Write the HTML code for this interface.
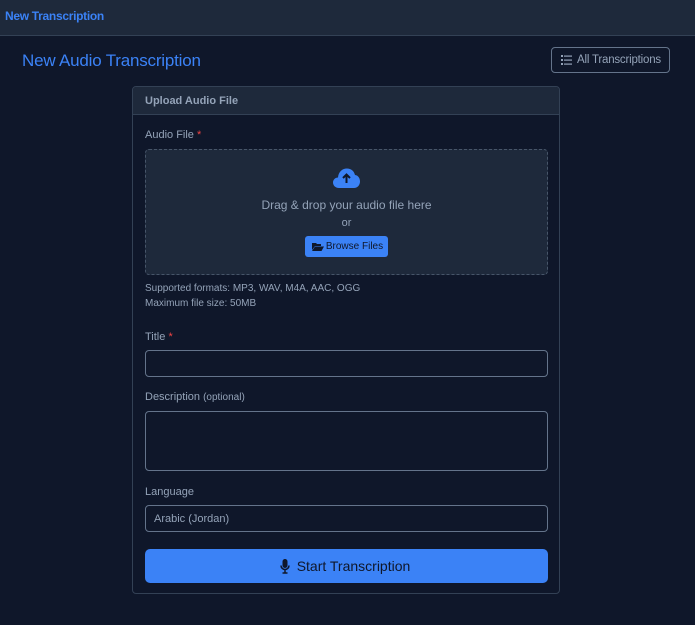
<!DOCTYPE html>
<html><head><meta charset="utf-8"><style>
*{box-sizing:border-box;margin:0;padding:0}
body{width:695px;height:625px;background:#0f172a;font-family:"Liberation Sans","DejaVu Sans",sans-serif;color:#94a3b8;position:relative;overflow:hidden}
.nav{position:absolute;left:0;top:0;width:695px;height:36px;background:#1e293b;border-bottom:1px solid #334155}
.nav span{position:absolute;left:5px;top:9px;font-size:12px;font-weight:bold;color:#3b82f6;letter-spacing:-0.3px}
h1{position:absolute;left:22px;top:51px;font-size:17px;font-weight:normal;color:#3b82f6;letter-spacing:-0.2px}
.allbtn{position:absolute;left:551px;top:47px;width:119px;height:26px;border:1px solid #64748b;border-radius:4px;font-size:11.5px;color:#94a3b8;line-height:24px;padding-left:25px;letter-spacing:-0.2px}
.card{position:absolute;left:132px;top:86px;width:428px;height:508px;border:1px solid #334155;border-radius:4px;overflow:hidden}
.ch{height:28px;background:#1e293b;border-bottom:1px solid #334155;font-size:11px;font-weight:bold;padding:8px 12px;color:#94a3b8}
.a{position:absolute;font-size:11px;color:#94a3b8}
.req{color:#ef4444}
.drop{position:absolute;left:12px;top:62px;width:403px;height:126px;background:#1e293b;border:1px dashed #475569;border-radius:4px;text-align:center}
.inp{position:absolute;left:12px;width:403px;border:1px solid #64748b;border-radius:4px;background:#0f172a}
.go{position:absolute;left:12px;top:462px;width:403px;height:34px;background:#3b82f6;border-radius:5px;color:#0f172a;font-size:14px;text-align:center;line-height:34px}
</style></head><body>
<div class="nav"><span>New Transcription</span></div>
<h1>New Audio Transcription</h1>
<div class="allbtn"><svg style="position:absolute;left:9px;top:7px" width="11" height="10" viewBox="0 0 11 10"><g fill="#94a3b8"><rect x="0" y="0" width="2" height="2"/><rect x="0" y="4" width="2" height="2"/><rect x="0" y="8" width="2" height="2"/><rect x="3" y="0.5" width="8" height="1.2"/><rect x="3" y="4.5" width="8" height="1.2"/><rect x="3" y="8.5" width="8" height="1.2"/></g></svg>All Transcriptions</div>
<div class="card">
<div class="ch">Upload Audio File</div>
<div class="a" style="left:12px;top:42px">Audio File <span class="req">*</span></div>
<div class="drop">
<svg style="position:absolute;left:186px;top:17px" width="29" height="22" viewBox="0 0 29 22"><path d="M7 21C3 21 1 18 1 15.5 1 12.5 3.5 10.5 6 10.5 6.5 5 10 1.5 15 1.5 19 1.5 22 4 23 8 26.5 8.5 28 11.5 28 14.5 28 18 25.5 21 22 21Z" fill="#3b82f6"/><path d="M14.5 16V7.5M11 11l3.5-3.5L18 11" stroke="#0f172a" stroke-width="2" fill="none"/></svg>
<div style="position:absolute;left:0;right:0;top:48px;font-size:12px;color:#94a3b8">Drag &amp; drop your audio file here</div>
<div style="position:absolute;left:0;right:0;top:67px;font-size:11px;color:#94a3b8">or</div>
<div style="position:absolute;left:159px;top:86px;width:83px;height:21px;background:#3b82f6;border-radius:3px;color:#0f172a;font-size:10px;line-height:21px;padding-left:16px"><svg style="position:absolute;left:7px;top:6px" width="12" height="9" viewBox="0 0 12 9"><path d="M0 1h4l1 1h4v2H3L0 8Z M3 4.5h9L9.5 9H0Z" fill="#0f172a"/></svg>Browse Files</div>
</div>
<div class="a" style="left:12px;top:196px;font-size:10px">Supported formats: MP3, WAV, M4A, AAC, OGG</div>
<div class="a" style="left:12px;top:211px;font-size:10px">Maximum file size: 50MB</div>
<div class="a" style="left:12px;top:244px">Title <span class="req">*</span></div>
<div class="inp" style="top:263px;height:27px"></div>
<div class="a" style="left:12px;top:304px">Description <span style="font-size:10px">(optional)</span></div>
<div class="inp" style="top:324px;height:60px"></div>
<div class="a" style="left:12px;top:399px">Language</div>
<div class="inp" style="top:418px;height:27px;font-size:11px;padding:7px 8px">Arabic (Jordan)</div>
<div class="go"><svg style="position:absolute;left:135px;top:10px" width="10" height="15" viewBox="0 0 10 15"><rect x="2.5" y="0" width="5" height="9" rx="2.5" fill="#0f172a"/><path d="M1 6.5a4 4 0 0 0 8 0M5 11v3M2.5 14h5" stroke="#0f172a" stroke-width="1.5" fill="none"/></svg><span style="padding-left:14px">Start Transcription</span></div>
</div>
</body></html>
